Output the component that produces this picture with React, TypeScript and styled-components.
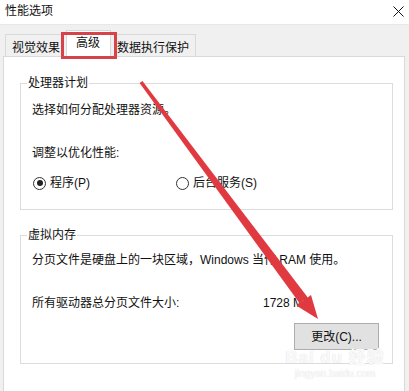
import styled, { createGlobalStyle } from "styled-components";

const Global = createGlobalStyle`
  html, body {
    margin: 0;
    padding: 0;
    background: #ffffff;
  }
  body {
    font-family: "Liberation Sans", "Noto Sans CJK SC", "Noto Sans", sans-serif;
    font-size: 12px;
    color: #111;
  }
`;

const Window = styled.div`
  position: relative;
  width: 409px;
  height: 391px;
  overflow: hidden;
  background: #ffffff;
  display: flex;
  flex-direction: column;
`;

const TitleBar = styled.div`
  height: 25px;
  flex: none;
  display: flex;
  align-items: center;
  justify-content: space-between;
  padding: 0 5px 2px 5px;
  box-sizing: border-box;
  background: #ffffff;
  border-bottom: 1px solid #e8e8e8;
`;

const Title = styled.span`
  font-size: 12px;
  line-height: 16px;
`;

const Body = styled.div`
  flex: 1;
  display: flex;
  flex-direction: column;
  background: #f0f0f0;
  padding: 6px 4px 0 3px;
`;

const TabStrip = styled.div`
  display: flex;
  align-items: flex-end;
  height: 26px;
  padding-left: 2px;
  margin-bottom: -1px;
  position: relative;
  z-index: 1;
`;

const Tab = styled.div<{ $active?: boolean }>`
  box-sizing: border-box;
  height: ${(p) => (p.$active ? "27px" : "23px")};
  padding: ${(p) => (p.$active ? "4px 10px 0 9px" : "5px 6px 0 6px")};
  margin: ${(p) => (p.$active ? "0 -1px" : "0")};
  background: ${(p) => (p.$active ? "#ffffff" : "#f0f0f0")};
  border: 1px solid #d9d9d9;
  border-bottom: ${(p) => (p.$active ? "1px solid #ffffff" : "1px solid #d9d9d9")};
  line-height: 16px;
  white-space: nowrap;
  position: relative;
  z-index: ${(p) => (p.$active ? 2 : 1)};
`;

const Panel = styled.div`
  flex: 1;
  background: #ffffff;
  border: 1px solid #d9d9d9;
  border-bottom: none;
  padding: 18px 11px 0 16px;
`;

const Group = styled.fieldset<{ $gap?: number }>`
  margin: ${(p) => p.$gap ?? 0}px 0 0 0;
  border: 1px solid #dcdcdc;
  padding: 0 13px 0 11px;
  min-width: 0;
`;

const Legend = styled.legend`
  padding: 0 1px;
  margin-left: -5px;
  line-height: 16px;
`;

const Line = styled.div<{ $top: number }>`
  margin-top: ${(p) => p.$top}px;
  line-height: 16px;
  white-space: nowrap;
`;

const RadioRow = styled.div`
  margin-top: 14px;
  margin-bottom: 18px;
  display: grid;
  grid-template-columns: 143px 1fr;
  line-height: 16px;
`;

const RadioItem = styled.label`
  display: flex;
  align-items: center;
  gap: 4px;
`;

const RadioDot = styled.span<{ $checked?: boolean }>`
  width: 11px;
  height: 11px;
  border: 1px solid #333;
  border-radius: 50%;
  margin-left: 1px;
  display: flex;
  align-items: center;
  justify-content: center;
  &::after {
    content: "";
    width: 6px;
    height: 6px;
    border-radius: 50%;
    background: ${(p) => (p.$checked ? "#222" : "transparent")};
  }
`;

const SizeRow = styled.div`
  margin-top: 27px;
  display: grid;
  grid-template-columns: 231px 1fr;
  line-height: 16px;
`;

const ButtonRow = styled.div`
  display: flex;
  justify-content: flex-end;
  margin-top: 12px;
  margin-bottom: 13px;
`;

const Button = styled.div`
  width: 85px;
  height: 27px;
  box-sizing: border-box;
  background: #e1e1e1;
  border: 1px solid #adadad;
  display: flex;
  align-items: center;
  justify-content: center;
  line-height: 16px;
`;

const Highlight = styled.div`
  position: absolute;
  left: 61px;
  top: 32px;
  width: 56px;
  height: 27px;
  box-sizing: border-box;
  border: 3px solid #d6434b;
  z-index: 5;
`;

const Overlay = styled.svg`
  position: absolute;
  left: 0;
  top: 0;
  z-index: 6;
  pointer-events: none;
`;

const Watermark = styled.div`
  position: absolute;
  left: 285px;
  top: 348px;
  width: 100px;
  z-index: 7;
  display: flex;
  flex-direction: column;
  align-items: center;
  color: rgba(255, 255, 255, 0.9);
  text-shadow: 0 0 1px #d0d0d0;
  font-family: "Liberation Sans", "Noto Sans CJK SC", sans-serif;
`;

const MarkTop = styled.span`
  font-size: 17px;
  font-weight: bold;
  line-height: 20px;
  letter-spacing: 1px;
`;

const MarkBottom = styled.span`
  font-size: 10px;
  line-height: 12px;
`;

export default function App() {
  return (
    <>
      <Global />
      <Window>
        <TitleBar>
          <Title>性能选项</Title>
          <svg width="11" height="11" viewBox="0 0 11 11">
            <path d="M0.5 0.5 L10.5 10.5 M10.5 0.5 L0.5 10.5" stroke="#111" strokeWidth="1" />
          </svg>
        </TitleBar>
        <Body>
          <TabStrip>
            <Tab>视觉效果</Tab>
            <Tab $active>高级</Tab>
            <Tab>数据执行保护</Tab>
          </TabStrip>
          <Panel>
            <Group>
              <Legend>处理器计划</Legend>
              <Line $top={11}>选择如何分配处理器资源。</Line>
              <Line $top={27}>调整以优化性能:</Line>
              <RadioRow>
                <RadioItem>
                  <RadioDot $checked />
                  程序(P)
                </RadioItem>
                <RadioItem>
                  <RadioDot />
                  后台服务(S)
                </RadioItem>
              </RadioRow>
            </Group>
            <Group $gap={17}>
              <Legend>虚拟内存</Legend>
              <Line $top={9}>分页文件是硬盘上的一块区域，Windows 当作 RAM 使用。</Line>
              <SizeRow>
                <span>所有驱动器总分页文件大小:</span>
                <span>1728 MB</span>
              </SizeRow>
              <ButtonRow>
                <Button>更改(C)...</Button>
              </ButtonRow>
            </Group>
          </Panel>
        </Body>
        <Highlight />
        <Overlay width="409" height="391" viewBox="0 0 409 391">
          <polygon
            points="139.6,83.1 142.4,81 307.8,297.5 299.8,303.4"
            fill="#e03a40"
          />
          <polygon points="318,319 296.6,305.8 311,295" fill="#e03a40" />
        </Overlay>
        <Watermark>
          <MarkTop>Bai du 经验</MarkTop>
          <MarkBottom>jingyan.baidu.com</MarkBottom>
        </Watermark>
      </Window>
    </>
  );
}
